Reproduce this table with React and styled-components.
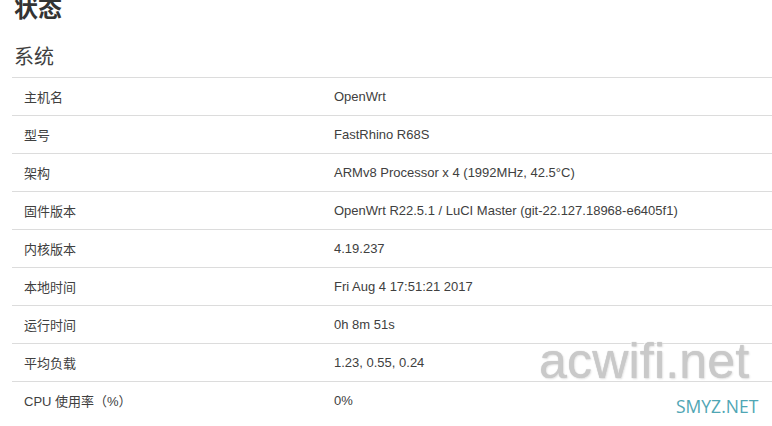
import React from "react";
import styled, { createGlobalStyle } from "styled-components";

const rows = [
  { label: "主机名", value: "OpenWrt" },
  { label: "型号", value: "FastRhino R68S" },
  { label: "架构", value: "ARMv8 Processor x 4 (1992MHz, 42.5°C)" },
  { label: "固件版本", value: "OpenWrt R22.5.1 / LuCI Master (git-22.127.18968-e6405f1)" },
  { label: "内核版本", value: "4.19.237" },
  { label: "本地时间", value: "Fri Aug 4 17:51:21 2017" },
  { label: "运行时间", value: "0h 8m 51s" },
  { label: "平均负载", value: "1.23, 0.55, 0.24" },
  { label: "CPU 使用率（%）", value: "0%" },
];

const GlobalStyle = createGlobalStyle`
  html, body {
    margin: 0;
    background: #fff;
    overflow: hidden;
  }
  body {
    font-family: "Liberation Sans", "Noto Sans CJK SC", sans-serif;
    color: #404040;
  }
`;

const Page = styled.div`
  position: relative;
  width: 772px;
  height: 426px;
  padding-left: 12px;
  box-sizing: border-box;
  overflow: hidden;
`;

// the page is scrolled a little, so the title sits partly above the top edge
const Title = styled.h2`
  margin: -6px 0 0 2px;
  font-size: 24px;
  line-height: 30px;
  font-weight: bold;
  color: #333;
`;

const Section = styled.h3`
  margin: 19px 0 6px 2px;
  font-size: 20px;
  line-height: 28px;
  font-weight: normal;
  color: #404040;
`;

const Table = styled.div`
  width: 780px;
`;

const Row = styled.div`
  display: grid;
  grid-template-columns: 322px 1fr;
  height: 37px;
  align-items: center;
  border-top: 1px solid #dcdcdc;
  font-size: 13px;
`;

const Cell = styled.div`
  padding-left: ${(p) => (p.$value ? "0" : "12px")};
  white-space: nowrap;
`;

const Watermark = styled.div`
  position: absolute;
  left: 539px;
  top: 333px;
  font-family: "Liberation Sans", sans-serif;
  font-size: 50px;
  line-height: 56px;
  color: #c4c4c4;
  opacity: 0.9;
  text-shadow: 0 0 1px #bdbdbd, 1px 1px 2px #e0e0e0, -1px -1px 1px #fff;
  letter-spacing: 0.2px;
`;

const Brand = styled.div`
  position: absolute;
  left: 676px;
  top: 395px;
  font-family: "Open Sans", sans-serif;
  font-size: 17.5px;
  line-height: 22px;
  color: #4fa6b4;
`;

export default function App() {
  return (
    <>
      <GlobalStyle />
      <Page>
        <Title>状态</Title>
        <Section>系统</Section>
        <Table>
          {rows.map((r) => (
            <Row key={r.label}>
              <Cell>{r.label}</Cell>
              <Cell $value>{r.value}</Cell>
            </Row>
          ))}
        </Table>
        <Watermark>acwifi.net</Watermark>
        <Brand>SMYZ.NET</Brand>
      </Page>
    </>
  );
}
